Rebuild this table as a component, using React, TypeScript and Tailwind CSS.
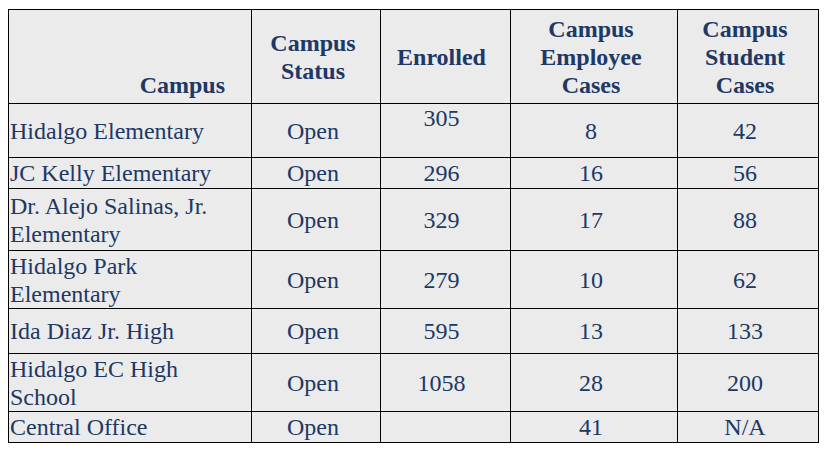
const rows = [
  { name: "Hidalgo Elementary", status: "Open", enrolled: "305", emp: "8", stu: "42", h: "h-[54px]", top: true },
  { name: "JC Kelly Elementary", status: "Open", enrolled: "296", emp: "16", stu: "56", h: "h-[31px]" },
  { name: "Dr. Alejo Salinas, Jr. Elementary", status: "Open", enrolled: "329", emp: "17", stu: "88", h: "h-[62px]" },
  { name: "Hidalgo Park Elementary", status: "Open", enrolled: "279", emp: "10", stu: "62", h: "h-[58px]" },
  { name: "Ida Diaz Jr. High", status: "Open", enrolled: "595", emp: "13", stu: "133", h: "h-[45px]" },
  { name: "Hidalgo EC High School", status: "Open", enrolled: "1058", emp: "28", stu: "200", h: "h-[58px]" },
  { name: "Central Office", status: "Open", enrolled: "", emp: "41", stu: "N/A", h: "h-[31px]" },
];

const App = () => {
  return (
    <div className="w-[828px] h-[454px] bg-white pt-[9px] pl-[8px] [font-family:'Liberation_Serif',serif] text-[24px] text-[#203864]">
      <table className="table-fixed border-collapse w-[810px] bg-[#ebebeb] [font-family:'Liberation_Serif',serif]">
        <colgroup>
          <col className="w-[243px]" />
          <col className="w-[129px]" />
          <col className="w-[130px]" />
          <col className="w-[167px]" />
          <col className="w-[141px]" />
        </colgroup>
        <thead>
          <tr className="h-[94px] font-bold leading-[28px]">
            <th className="border border-black align-bottom text-right pr-[26px] pb-[4px] p-0 font-bold">Campus</th>
            <th className="border border-black align-middle text-center pr-[6px] font-bold">Campus<br />Status</th>
            <th className="border border-black align-middle text-center pr-[8px] font-bold">Enrolled</th>
            <th className="border border-black align-middle text-center pr-[6px] font-bold">Campus<br />Employee<br />Cases</th>
            <th className="border border-black align-middle text-center pr-[6px] font-bold">Campus<br />Student<br />Cases</th>
          </tr>
        </thead>
        <tbody>
          {rows.map((r) => (
            <tr key={r.name} className={`${r.h} leading-[28px]`}>
              <td className="border border-black align-middle text-left pl-[1px] pr-[6px]">{r.name}</td>
              <td className="border border-black align-middle text-center pr-[6px]">{r.status}</td>
              <td className={`border border-black text-center pr-[8px] ${r.top ? "align-top" : "align-middle"}`}>{r.enrolled}</td>
              <td className="border border-black align-middle text-center pr-[6px]">{r.emp}</td>
              <td className="border border-black align-middle text-center pr-[6px]">{r.stu}</td>
            </tr>
          ))}
        </tbody>
      </table>
    </div>
  );
};

export default App;
